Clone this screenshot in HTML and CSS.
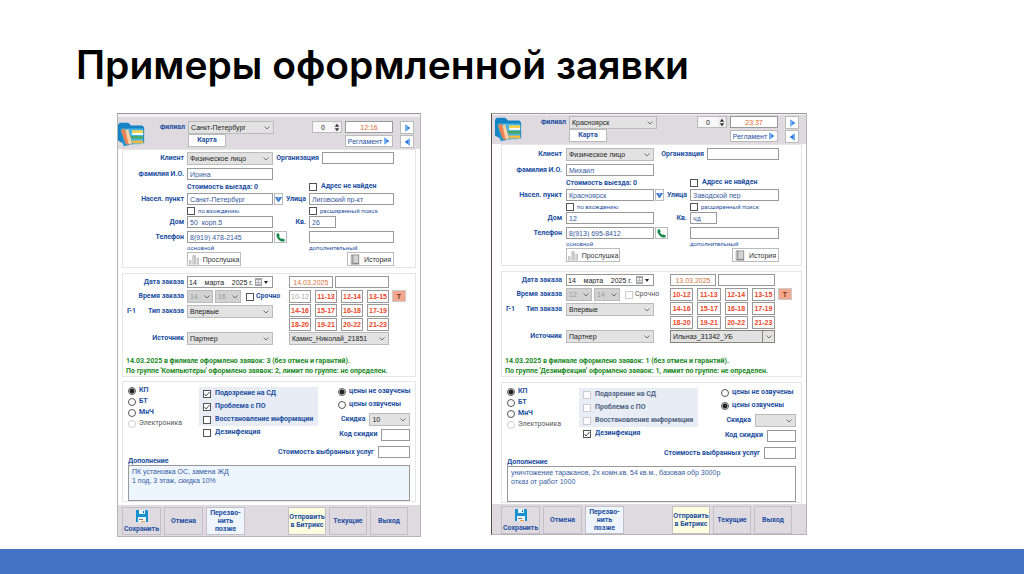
FILE: index.html
```html
<!DOCTYPE html>
<html lang="ru">
<head>
<meta charset="utf-8">
<meta name="viewport" content="width=device-width, initial-scale=1">
<title>Примеры оформленной заявки</title>
<link rel="stylesheet" href="styles.css">
</head>
<body>
<svg class="sprite" aria-hidden="true">
  <symbol id="folder" viewBox="0 0 30 26">
    <path fill="#1583c4" d="M0 3l2-2h9l3 3h12l2 2v17H5L0 20z"/>
    <path fill="#49b8e6" d="M3 7h24v14l-3 3H6z"/>
    <path fill="#f7d34f" d="M15 9h12v3H15z"/><path fill="#fff" d="M15 12h12v2H15z"/>
    <path fill="#4ba66a" d="M13 15h14v3H13z"/><path fill="#f4b942" d="M11 20h16v3H11z"/>
    <path fill="#2196cf" d="M2 7l10 3 4 14-10 2z"/>
    <path fill="#ef8254" d="M3 9l4-2 5 15-1 3-3-2z"/><path fill="#fbd0a3" d="M8 9l3-1 4 14-1 3-3-2z"/>
  </symbol>
  <symbol id="next" viewBox="0 0 10 10"><path fill="#2474dc" d="M2 0l7 5-7 5z"/><path fill="#79b5f5" d="M2 0l3 2v6l-3 2z"/></symbol>
  <symbol id="prev" viewBox="0 0 10 10"><path fill="#2474dc" d="M8 0L1 5l7 5z"/><path fill="#79b5f5" d="M8 0L6 1v8l2 1z"/></symbol>
  <symbol id="down" viewBox="0 0 10 10"><path fill="#3a78d2" d="M0 2h10L6 9H4z"/><path fill="#c2dcf8" d="M3 3h4L5 5z"/></symbol>
  <symbol id="spin" viewBox="0 0 10 12"><path fill="#333" d="M2 5l3-4 3 4zM2 7h6l-3 4z"/></symbol>
  <symbol id="phone" viewBox="0 0 12 12"><path fill="#17884b" d="M1 1l2-1 2 3-1 2 3 3 1-1 4 2-1 2c-5 2-12-5-10-10z"/></symbol>
  <symbol id="bars" viewBox="0 0 12 12"><path fill="#bbb" d="M0 7h3v5H0zM4 1h4v11H4zM9 4h3v8H9z"/><path fill="#e2e2e2" d="M1 8h1v3H1zM5 2h1v9H5zM10 5h1v6h-1z"/></symbol>
  <symbol id="book" viewBox="0 0 12 12"><path fill="#888" d="M1 0h10v12H1z"/><path fill="#d4d4d4" d="M4 1h6v9H4z"/><path fill="#bdbdbd" d="M1 1h2v10H1z"/></symbol>
  <symbol id="calendar" viewBox="0 0 14 8"><path fill="#a4a8ae" d="M0 0h7v8H0z"/><path fill="#e8edf3" d="M1 2h5v4H1z"/><path fill="#bbb" d="M3 2h1v5H3zM1 4h5v1H1z"/><path fill="#222" d="M9 3h4l-2 3z"/></symbol>
  <symbol id="save" viewBox="0 0 12 12"><path fill="#188fce" d="M0 0h11l1 1v11H0z"/><path fill="#e9f5fb" d="M3 0h6v4H3zM2 7h8v5H2z"/><path fill="#126aa5" d="M7 1h1v2H7z"/><path fill="#777" d="M3 9h4v1H3z"/><path fill="#f2a03d" d="M5 11h4v1H5z"/></symbol>
</svg>
<main class="slide">
  <h1 class="title">Примеры оформленной заявки</h1>
  <div class="windows">

    <form class="window">
      <header class="bar">
        <svg class="folder"><use href="#folder"/></svg>
        <label class="bar-label" for="a-branch">Филиал</label>
        <div class="branch">
          <select id="a-branch"><option>Санкт-Петербург</option></select>
          <button class="btn map" type="button">Карта</button>
        </div>
        <div class="clock">
          <label class="spinner"><input aria-label="Счётчик" value="0"><svg><use href="#spin"/></svg></label>
          <input class="time" aria-label="Время" value="12:16">
          <button class="btn rules" type="button">Регламент<svg><use href="#next"/></svg></button>
        </div>
        <div class="nav">
          <button class="btn" type="button" aria-label="Вперёд"><svg><use href="#next"/></svg></button>
          <button class="btn" type="button" aria-label="Назад"><svg><use href="#prev"/></svg></button>
        </div>
      </header>

      <section class="panel client">
        <label class="name" for="a-client">Клиент</label>
        <select id="a-client"><option>Физическое лицо</option></select>
        <div class="org"><label for="a-org">Организация</label><input id="a-org"></div>
        <label class="name" for="a-fio">Фамилия И.О.</label>
        <input id="a-fio" value="Ирина">
        <p class="cost">Стоимость выезда: 0</p>
        <label class="check second"><input type="checkbox">Адрес не найден</label>
        <label class="name" for="a-town">Насел. пункт</label>
        <input id="a-town" value="Санкт-Петербург">
        <div class="mid"><button class="btn tiny" type="button" aria-label="Список"><svg><use href="#down"/></svg></button><label for="a-street">Улица</label></div>
        <input id="a-street" value="Лиговский пр-кт">
        <label class="check small first"><input type="checkbox">по вхождению</label>
        <label class="check small second"><input type="checkbox">расширенный поиск</label>
        <label class="name" for="a-house">Дом</label>
        <input id="a-house" value="50  корп.5">
        <label class="mid flat" for="a-flat">Кв.</label>
        <input class="short" id="a-flat" value="26">
        <label class="name" for="a-phone">Телефон</label>
        <input id="a-phone" value="8(919) 478-2145">
        <div class="mid"><button class="btn call" type="button" aria-label="Позвонить"><svg><use href="#phone"/></svg></button></div>
        <input aria-label="Дополнительный телефон">
        <span class="hint first">основной</span><span class="hint second">дополнительный</span>
        <button class="btn wide first" type="button"><svg><use href="#bars"/></svg>Прослушка</button>
        <button class="btn wide history" type="button"><svg><use href="#book"/></svg>История</button>
      </section>

      <section class="panel order">
        <label class="name" for="a-date">Дата заказа</label>
        <div class="date"><input id="a-date" value="14    марта    2025 г."><svg><use href="#calendar"/></svg></div>
        <div class="dates"><input class="orange" aria-label="Дата" value="14.03.2025"><input aria-label="Примечание"></div>
        <label class="name when" for="a-from">Время заказа</label>
        <div class="hours">
          <select id="a-from" disabled><option>14</option></select>
          <select aria-label="До" disabled><option>16</option></select>
          <label class="check"><input type="checkbox">Срочно</label>
        </div>
        <div class="slots">
          <button class="off" type="button">10-12</button><button type="button">11-13</button><button type="button">12-14</button><button type="button">13-15</button>
          <button type="button">14-16</button><button type="button">15-17</button><button type="button">16-18</button><button type="button">17-19</button>
          <button type="button">18-20</button><button type="button">19-21</button><button type="button">20-22</button><button type="button">21-23</button>
        </div>
        <button class="mark" type="button">Т</button>
        <label class="name type" for="a-type"><span>Г-1</span>Тип заказа</label>
        <select class="kind" id="a-type"><option>Впервые</option></select>
        <label class="name source" for="a-source">Источник</label>
        <select class="source" id="a-source"><option>Партнер</option></select>
        <select class="source agent" aria-label="Партнер"><option>Камис_Николай_21851</option></select>
        <p class="stats">14.03.2025 в филиале оформлено заявок: 3 (без отмен и гарантий).<br>По группе 'Компьютеры' оформлено заявок: 2, лимит по группе: не определен.</p>
      </section>

      <section class="panel details">
        <div class="options">
          <div class="kinds">
            <label class="check"><input type="radio" name="a-kind" checked>КП</label>
            <label class="check"><input type="radio" name="a-kind">БТ</label>
            <label class="check"><input type="radio" name="a-kind">МнЧ</label>
            <label class="check dim"><input type="radio" name="a-kind" disabled>Электроника</label>
          </div>
          <div class="works">
            <div class="tinted">
              <label class="check"><input type="checkbox" checked>Подозрение на СД</label>
              <label class="check"><input type="checkbox" checked>Проблема с ПО</label>
              <label class="check"><input type="checkbox">Восстановление информации</label>
            </div>
            <label class="check"><input type="checkbox">Дезинфекция</label>
          </div>
          <div class="prices">
            <label class="check"><input type="radio" name="a-price" checked>цены не озвучены</label>
            <label class="check"><input type="radio" name="a-price">цены озвучены</label>
            <div class="pair"><label for="a-sale">Скидка</label><select id="a-sale"><option>10</option></select></div>
            <div class="pair"><label for="a-code">Код скидки</label><input id="a-code"></div>
          </div>
        </div>
        <div class="pair total"><label for="a-total">Стоимость выбранных услуг</label><input id="a-total"></div>
        <label class="note-label" for="a-note">Дополнение</label>
        <textarea class="blue" id="a-note">ПК установка ОС, замена ЖД
1 под, 3 этаж, скидка 10%</textarea>
      </section>

      <footer class="actions">
        <button type="button"><svg><use href="#save"/></svg>Сохранить</button>
        <button type="button">Отмена</button>
        <button class="later" type="button">Перезво-<br>нить<br>позже</button>
        <button class="send" type="button">Отправить<br>в Битрикс</button>
        <button type="button">Текущие</button>
        <button type="button">Выход</button>
      </footer>
    </form>

    <form class="window wider">
      <header class="bar">
        <svg class="folder"><use href="#folder"/></svg>
        <label class="bar-label" for="b-branch">Филиал</label>
        <div class="branch">
          <select id="b-branch"><option>Красноярск</option></select>
          <button class="btn map" type="button">Карта</button>
        </div>
        <div class="clock">
          <label class="spinner"><input aria-label="Счётчик" value="0"><svg><use href="#spin"/></svg></label>
          <input class="time" aria-label="Время" value="23:37">
          <button class="btn rules" type="button">Регламент<svg><use href="#next"/></svg></button>
        </div>
        <div class="nav">
          <button class="btn" type="button" aria-label="Вперёд"><svg><use href="#next"/></svg></button>
          <button class="btn" type="button" aria-label="Назад"><svg><use href="#prev"/></svg></button>
        </div>
      </header>

      <section class="panel client">
        <label class="name" for="b-client">Клиент</label>
        <select id="b-client"><option>Физическое лицо</option></select>
        <div class="org"><label for="b-org">Организация</label><input id="b-org"></div>
        <label class="name" for="b-fio">Фамилия И.О.</label>
        <input id="b-fio" value="Михаил">
        <p class="cost">Стоимость выезда: 0</p>
        <label class="check second"><input type="checkbox">Адрес не найден</label>
        <label class="name" for="b-town">Насел. пункт</label>
        <input id="b-town" value="Красноярск">
        <div class="mid"><button class="btn tiny" type="button" aria-label="Список"><svg><use href="#down"/></svg></button><label for="b-street">Улица</label></div>
        <input id="b-street" value="Заводской пер">
        <label class="check small first"><input type="checkbox">по вхождению</label>
        <label class="check small second"><input type="checkbox">расширенный поиск</label>
        <label class="name" for="b-house">Дом</label>
        <input id="b-house" value="12">
        <label class="mid flat" for="b-flat">Кв.</label>
        <input class="short" id="b-flat" value="чд">
        <label class="name" for="b-phone">Телефон</label>
        <input id="b-phone" value="8(913) 695-8412">
        <div class="mid"><button class="btn call" type="button" aria-label="Позвонить"><svg><use href="#phone"/></svg></button></div>
        <input aria-label="Дополнительный телефон">
        <span class="hint first">основной</span><span class="hint second">дополнительный</span>
        <button class="btn wide first" type="button"><svg><use href="#bars"/></svg>Прослушка</button>
        <button class="btn wide history" type="button"><svg><use href="#book"/></svg>История</button>
      </section>

      <section class="panel order">
        <label class="name" for="b-date">Дата заказа</label>
        <div class="date"><input id="b-date" value="14    марта    2025 г."><svg><use href="#calendar"/></svg></div>
        <div class="dates"><input class="orange" aria-label="Дата" value="13.03.2025"><input aria-label="Примечание"></div>
        <label class="name when" for="b-from">Время заказа</label>
        <div class="hours">
          <select id="b-from" disabled><option>12</option></select>
          <select aria-label="До" disabled><option>14</option></select>
          <label class="check dim"><input type="checkbox" disabled>Срочно</label>
        </div>
        <div class="slots">
          <button type="button">10-12</button><button type="button">11-13</button><button type="button">12-14</button><button type="button">13-15</button>
          <button type="button">14-16</button><button type="button">15-17</button><button type="button">16-18</button><button type="button">17-19</button>
          <button type="button">18-20</button><button type="button">19-21</button><button type="button">20-22</button><button type="button">21-23</button>
        </div>
        <button class="mark" type="button">Т</button>
        <label class="name type" for="b-type"><span>Г-1</span>Тип заказа</label>
        <select class="kind" id="b-type"><option>Впервые</option></select>
        <label class="name source" for="b-source">Источник</label>
        <select class="source" id="b-source"><option>Партнер</option></select>
        <select class="source agent focused" aria-label="Партнер"><option>Ильназ_31342_УБ</option></select>
        <p class="stats">14.03.2025 в филиале оформлено заявок: 1 (без отмен и гарантий).<br>По группе 'Дезинфекция' оформлено заявок: 1, лимит по группе: не определен.</p>
      </section>

      <section class="panel details">
        <div class="options">
          <div class="kinds">
            <label class="check"><input type="radio" name="b-kind" checked>КП</label>
            <label class="check"><input type="radio" name="b-kind">БТ</label>
            <label class="check"><input type="radio" name="b-kind">МнЧ</label>
            <label class="check dim"><input type="radio" name="b-kind" disabled>Электроника</label>
          </div>
          <div class="works">
            <div class="tinted muted">
              <label class="check"><input type="checkbox" disabled>Подозрение на СД</label>
              <label class="check"><input type="checkbox" disabled>Проблема с ПО</label>
              <label class="check"><input type="checkbox" disabled>Восстановление информации</label>
            </div>
            <label class="check"><input type="checkbox" checked>Дезинфекция</label>
          </div>
          <div class="prices">
            <label class="check"><input type="radio" name="b-price">цены не озвучены</label>
            <label class="check"><input type="radio" name="b-price" checked>цены озвучены</label>
            <div class="pair"><label for="b-sale">Скидка</label><select id="b-sale"><option></option></select></div>
            <div class="pair"><label for="b-code">Код скидки</label><input id="b-code"></div>
          </div>
        </div>
        <div class="pair total"><label for="b-total">Стоимость выбранных услуг</label><input id="b-total"></div>
        <label class="note-label" for="b-note">Дополнение</label>
        <textarea id="b-note">уничтожение тараканов, 2х комн.кв. 54 кв.м., базовая обр 3000р
отказ от работ 1000</textarea>
      </section>

      <footer class="actions">
        <button type="button"><svg><use href="#save"/></svg>Сохранить</button>
        <button type="button">Отмена</button>
        <button class="later" type="button">Перезво-<br>нить<br>позже</button>
        <button class="send" type="button">Отправить<br>в Битрикс</button>
        <button type="button">Текущие</button>
        <button type="button">Выход</button>
      </footer>
    </form>
  </div>
</main>
<div class="band"></div>
</body>
</html>
```
FILE: styles.css
```css
* { box-sizing: border-box; }

:root {
  --chevron: url("data:image/svg+xml,%3Csvg xmlns='http://www.w3.org/2000/svg' viewBox='0 0 6 4'%3E%3Cpath d='M0.500 0.500L3 3L5.500 0.500' fill='none' stroke='%23555' stroke-width='0.800'/%3E%3C/svg%3E");
}

body {
  margin: 0;
  min-height: 100vh;
  display: flex;
  flex-direction: column;
  background: #fff;
  color: #1d50a0;
  font: 7px/9px Roboto, sans-serif;
}

.sprite { display: none; }
.slide { flex: 1; }
.band { height: 25px; background: #4472c4; }

.title {
  margin: 0;
  padding: 42px 0 0 76px;
  color: #000;
  font: 600 39px/46px Inter, sans-serif;
}

.windows {
  display: grid;
  grid-template-columns: minmax(0, 304fr) minmax(0, 316fr);
  align-items: start;
  gap: 70px;
  padding: 25px 217px 0 117px;
}

/* Controls */
input, select, textarea, button {
  margin: 0;
  min-width: 0;
  border: 1px solid #999;
  border-radius: 0;
  background-color: #fff;
  color: inherit;
  font: 7px/9px "Liberation Sans", sans-serif;
}
input, select { height: 12px; padding: 0 2px; }
input { color: #3559a0; white-space: pre; }
select {
  height: 13px;
  appearance: none;
  border-color: #bbb;
  background: #e2e2e2 var(--chevron) no-repeat right 3px center / 6px 4px;
  color: #222;
}
select:disabled { background-color: #d2d2d2; color: #999; opacity: 1; }
button {
  display: flex;
  align-items: center;
  justify-content: center;
  padding: 0;
}
p { margin: 0; }

.btn { border-color: #bbb; gap: 1px; }
.btn svg { width: 7px; height: 8px; }

input[type="checkbox"], input[type="radio"] {
  appearance: none;
  flex: none;
  width: 8px;
  height: 8px;
  padding: 0;
  border: 1px solid #555;
}
input[type="radio"] { border-radius: 50%; }
input[type="radio"]:checked { background: radial-gradient(#222 0 2px, #fff 3px); }
input[type="checkbox"]:checked {
  background: #fff url("data:image/svg+xml,%3Csvg xmlns='http://www.w3.org/2000/svg' viewBox='0 0 6 6'%3E%3Cpath d='M0.500 3L2 5L5.500 1' fill='none' stroke='%23222' stroke-width='0.800'/%3E%3C/svg%3E") center / 6px 6px;
}
input[type="checkbox"]:disabled, input[type="radio"]:disabled { border-color: #ccc; }

.check { display: flex; align-items: center; gap: 4px; font-weight: bold; white-space: nowrap; }
.check.small { font-weight: normal; font-size: 6px; gap: 3px; }
.check.dim { font-weight: normal; color: #555; }

/* Window */
.window {
  --label: 61px;
  --gap: 3px;
  --field: 86px;
  --mid: 36px;
  --second: 85px;
  --inset: 4px;
  border: 1px solid #b5b5b5;
  border-top-color: #999;
  background: #fff;
}
.wider {
  --label: 60px;
  --gap: 4px;
  --field: 88px;
  --second: 89px;
  --inset: 9px;
  border-left-color: #5d4c42;
}

.bar {
  display: flex;
  align-items: flex-start;
  height: 35px;
  padding: 4px 6px 0 0;
  border-top: 3px solid #f3f1f4;
  background: #dfd9e0;
}
.wider .bar { height: 30px; padding: 1px 7px 0 3px; border-top-width: 1px; }
.folder { width: 28px; height: 26px; }
.bar-label { flex: 1; padding-right: 3px; text-align: right; font-weight: bold; line-height: 13px; }
.branch { width: var(--field); }
.branch select { display: block; width: 100%; }
.map { width: 38px; height: 13px; color: #1d50a0; font-family: Roboto, sans-serif; font-weight: bold; }
.clock {
  display: grid;
  grid-template-columns: 30px 48px;
  gap: 2px 3px;
  margin-left: 38px;
}
.wider .clock { margin-left: 40px; }
.spinner { display: flex; align-items: center; height: 12px; border: 1px solid #bbb; background: #eee; }
.spinner input { flex: 1; height: 10px; border: 0; color: #222; background: #f7f7f7; text-align: center; }
.spinner svg { width: 8px; height: 9px; }
.time { color: #e0662a; text-align: center; }
.rules { grid-column: 2; height: 12px; color: #1d50a0; }
.nav { display: grid; gap: 1px; margin-left: 7px; }
.nav .btn { width: 14px; height: 13px; }

.panel {
  margin: 0 4px 5px var(--inset);
  border: 1px solid #e6e6e6;
}

/* Client */
.client {
  display: grid;
  grid-template-columns: calc(var(--label) + var(--gap)) var(--field) var(--mid) var(--second);
  grid-template-rows: 16px 14px 11px 13px 10px 15px 12px 9px 14px;
  align-items: start;
  padding: 2px 0 1px;
}
.wider .client { padding: 3px 0; }
.name { grid-column: 1; padding-right: var(--gap); text-align: right; font-weight: bold; line-height: 12px; white-space: nowrap; }
.org { grid-column: 3 / 5; display: flex; align-items: center; justify-content: flex-end; gap: 3px; font-weight: bold; }
.org input { width: 72px; }
.first { grid-column: 2; }
.second { grid-column: 4; }
.cost { grid-column: 2; font-weight: bold; line-height: 11px; }
.mid { display: flex; align-items: center; justify-content: space-between; padding: 0 3px 0 1px; font-weight: bold; }
.mid.flat { justify-content: flex-end; line-height: 12px; }
.tiny { width: 9px; height: 12px; }
.call { width: 13px; height: 12px; }
.call svg { width: 9px; height: 9px; }
.short { width: 27px; }
.hint { font-size: 6px; line-height: 9px; }
.wide { width: 54px; height: 14px; color: #333; }
.wide svg { width: 10px; height: 11px; margin-right: 3px; }
.history { grid-column: 4; justify-self: end; width: 47px; }

/* Order */
.order {
  display: grid;
  grid-template-columns: calc(var(--label) + var(--gap)) calc(var(--field) + 16px) 1fr 14px;
  grid-template-rows: 14px 15px 14px 13px 24px 20px;
  align-items: start;
  margin-bottom: 4px;
  padding: 2px 9px 0 0;
}
.wider .order { grid-template-rows: 14px 15px 14px 13px 26px 20px; margin-bottom: 5px; }
.order > select, .date, .hours { grid-column: 2; width: var(--field); }
.date { display: flex; align-items: center; height: 12px; padding-right: 3px; border: 1px solid #999; }
.date input { flex: 1; height: 10px; padding: 0 1px; border: 0; color: #222; }
.date svg { width: 14px; height: 8px; }
.dates { grid-column: 3; display: grid; grid-template-columns: 45fr 56fr; gap: 2px; margin-right: 3px; }
.orange { color: #d9743a; text-align: center; }
.when, .hours { grid-row: 2; }
.hours { display: flex; align-items: center; gap: 2px; }
.hours select { width: 26px; flex: none; background-position: right 2px center; }
.hours .check { margin-left: 3px; gap: 2px; }
.slots {
  grid-column: 3;
  grid-row: 2 / 5;
  display: grid;
  grid-template-columns: repeat(4, 1fr);
  grid-auto-rows: 13px;
  gap: 1px 4px;
  margin-right: 3px;
}
.slots button { color: #ec4425; font-weight: bold; }
.slots .off { color: #aaa; font-weight: normal; }
.mark { grid-column: 4; grid-row: 2; height: 12px; border-color: #ccc; background: #f4a78d; color: #703020; font-weight: bold; }
.type, .kind { grid-row: 3; }
.type { display: flex; justify-content: space-between; padding-left: 4px; }
.source { grid-row: 5; }
.order > .agent { grid-column: 3; width: auto; margin-right: 3px; }
.agent.focused {
  border-color: #8d8478;
  background:
    var(--chevron) no-repeat right 2px center / 6px 4px,
    linear-gradient(#8d8478, #8d8478) no-repeat right 11px center / 1px 100%,
    #e2e2e2;
}
.stats { grid-column: 1 / -1; grid-row: 6; padding-left: 3px; color: #21891f; font-weight: bold; line-height: 10px; white-space: nowrap; }

/* Details */
.details { margin-bottom: 3px; padding: 3px 5px 0; }
.wider .details { margin-bottom: 1px; }
.options { display: grid; grid-template-columns: 71px 119px 1fr; }
.wider .options { grid-template-columns: 72px 119px 1fr; }
.kinds { display: grid; grid-auto-rows: 11px; align-content: start; }
.kinds .check { gap: 3px; }
.works { padding-top: 2px; }
.tinted { display: grid; grid-auto-rows: 13px; background: #e8ecf5; }
.works .check { padding-left: 4px; height: 13px; }
.muted { color: #4e6480; }
.prices { display: grid; grid-template-rows: 13px 13px 17px 13px; }
.prices .check { padding-left: 20px; gap: 3px; }
.wider .prices .check { padding-left: 23px; }
.pair { display: flex; align-items: center; justify-content: flex-end; gap: 4px; font-weight: bold; }
.pair select { width: 41px; }
.pair input { width: 29px; }
.total { padding: 5px 0 0; }
.total input { width: 32px; }
.note-label { display: block; font-weight: bold; line-height: 7px; }
textarea { display: block; width: 100%; height: 36px; padding: 1px 3px; resize: none; overflow: hidden; color: #3559a0; }
.blue { background: #edf6fe; }

/* Actions */
.actions {
  display: grid;
  grid-template-columns: repeat(3, 39px) 1fr repeat(3, 38px);
  gap: 3px;
  padding: 2px 12px 1px 4px;
  background: #dfd9e0;
}
.wider .actions { padding: 2px 14px 0 9px; }
.actions button {
  flex-direction: column;
  height: 28px;
  border-color: #c4bec8;
  background: #dfd9e0;
  color: #1d50a0;
  font: bold 7px/8px Roboto, sans-serif;
}
.actions svg { width: 12px; height: 12px; margin-bottom: 3px; }
.actions .later { background: #eef5fc; }
.actions .send { grid-column: 5; background: #fdfde0; }
```
